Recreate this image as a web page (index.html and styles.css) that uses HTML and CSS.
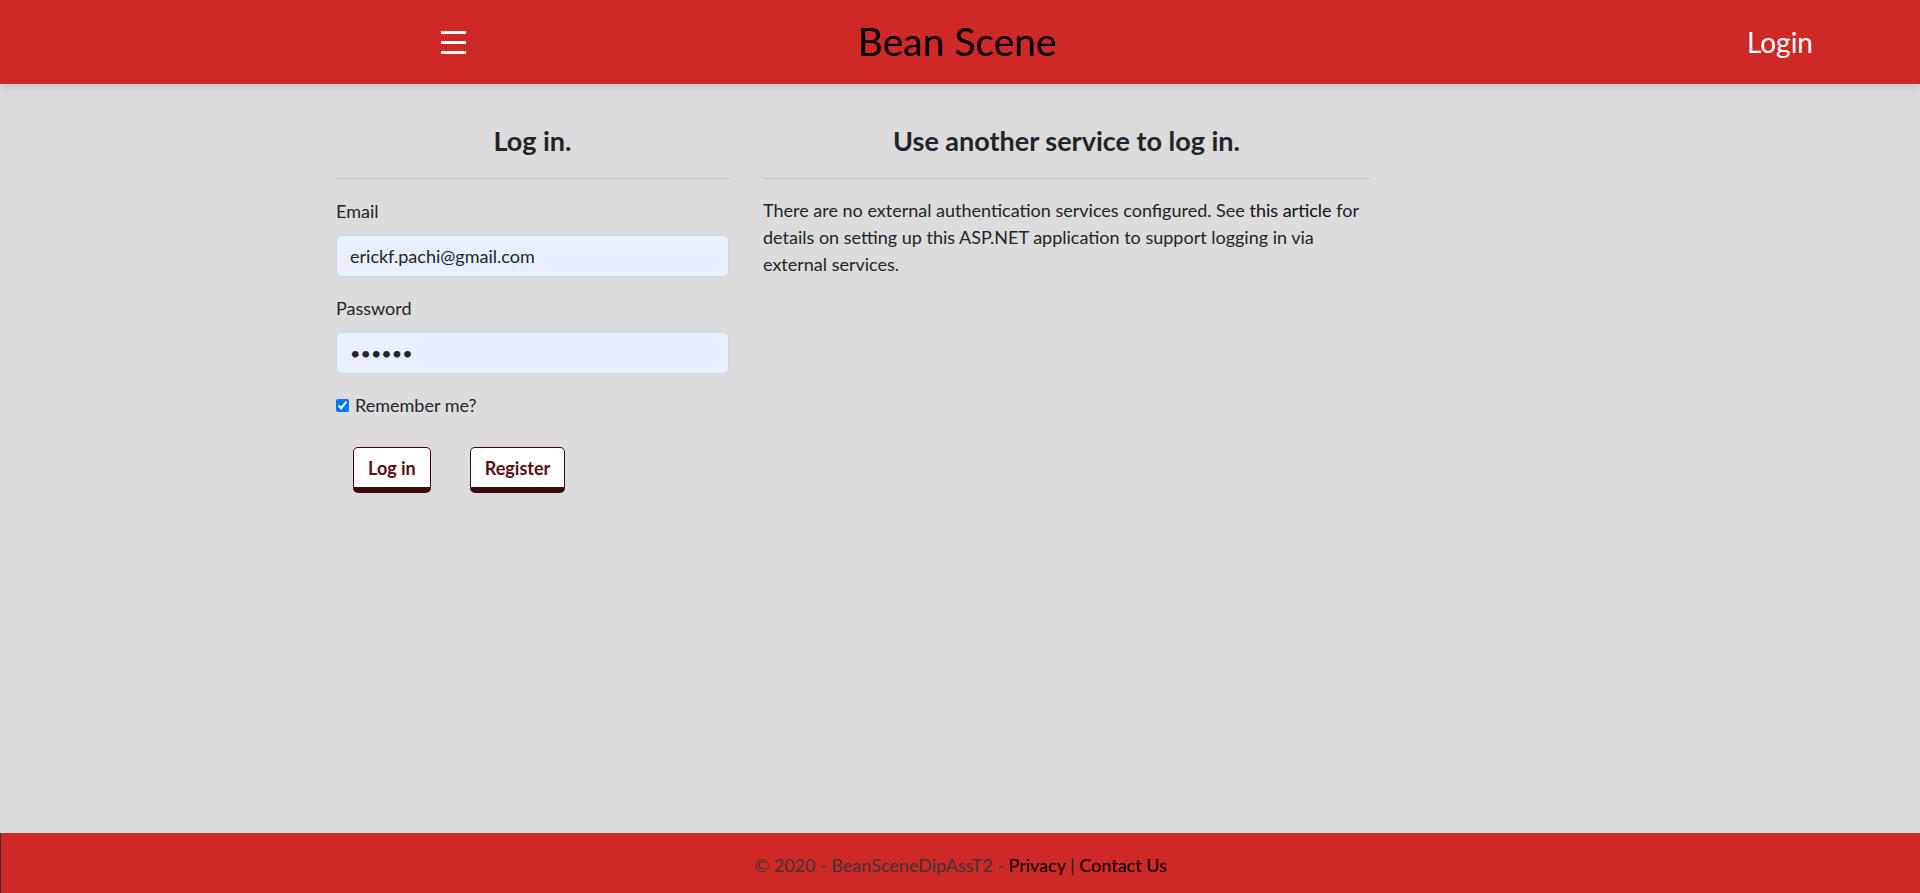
FILE: index.html
```html
<!DOCTYPE html>
<html lang="en">
<head>
<meta charset="utf-8">
<title>Log in - Bean Scene</title>
<link rel="stylesheet" href="styles.css">
</head>
<body>
<div class="page">
  <header class="topbar">
    <div class="nav-left">
      <svg class="burger" width="25" height="23" viewBox="0 0 25 23" aria-hidden="true">
        <rect x="0" y="0" width="25" height="3" fill="#fff"/>
        <rect x="0" y="10" width="25" height="3" fill="#fff"/>
        <rect x="0" y="20" width="25" height="3" fill="#fff"/>
      </svg>
    </div>
    <div class="brand">Bean Scene</div>
    <div class="nav-right"><a class="login-link" href="#">Login</a></div>
  </header>

  <main class="main">
    <div class="row">
      <section class="col col-left">
        <h4 class="col-title">Log in.</h4>
        <hr class="rule">
        <form class="login-form">
          <div class="group">
            <label class="label" for="email">Email</label>
            <input class="field" id="email" type="email" value="erickf.pachi@gmail.com">
          </div>
          <div class="group">
            <label class="label" for="pw">Password</label>
            <input class="field" id="pw" type="password" value="123456">
          </div>
          <div class="group check-row">
            <input class="check" id="remember" type="checkbox" checked>
            <label class="check-label" for="remember">Remember me?</label>
          </div>
          <div class="actions">
            <button class="btn" type="button">Log in</button>
            <button class="btn" type="button">Register</button>
          </div>
        </form>
      </section>
      <section class="col col-right">
        <h4 class="col-title">Use another service to log in.</h4>
        <hr class="rule">
        <p class="info">There are no external authentication services configured. See <a class="article" href="#">this article</a> for details on setting up this ASP.NET application to support logging in via external services.</p>
      </section>
    </div>
  </main>

  <footer class="footer">
    <span class="muted">© 2020 - BeanSceneDipAssT2 - </span><a class="foot-link" href="#">Privacy</a><span class="sep"> | </span><a class="foot-link" href="#">Contact Us</a>
  </footer>
</div>
</body>
</html>
```

FILE: styles.css
```css
* { box-sizing: border-box; }

html, body {
  margin: 0;
  padding: 0;
}

body {
  font-family: Lato, "Liberation Sans", sans-serif;
  font-size: 18px;
  line-height: 1.5;
  color: #212529;
  background: #dcdcdc;
}

.page {
  display: flex;
  flex-direction: column;
  min-height: 100vh;
}

.topbar {
  height: 84px;
  background: #cf2927;
  display: grid;
  grid-template-columns: 1fr auto 1fr;
  align-items: center;
  box-shadow: 0 2px 8px rgba(0, 0, 0, 0.12);
  position: relative;
  z-index: 1;
}

.nav-left {
  padding-left: 441px;
  display: flex;
  align-items: center;
}

.burger { display: block; }

.brand {
  font-size: 39px;
  line-height: 1;
  color: #000;
  padding-bottom: 1px;
  padding-right: 6px;
}

.nav-right {
  display: flex;
  justify-content: flex-end;
  padding-right: 107px;
}

.login-link {
  color: #fff;
  font-size: 28px;
  line-height: 1;
  text-decoration: none;
}

.main {
  flex: 1;
  padding-top: 41px;
}

.row {
  display: flex;
  padding-left: 319px;
}

.col { padding: 0 17px; }
.col-left { width: 427px; }
.col-right { width: 641px; }

.col-title {
  margin: 0;
  font-size: 27px;
  font-weight: 700;
  line-height: 1.2;
  text-align: center;
  color: #212529;
}

.rule {
  margin: 21px 0 0;
  border: 0;
  border-top: 1px solid #c4c4c4;
  height: 0;
}

.login-form { padding-top: 19px; }

.group { margin-bottom: 18px; }

.label {
  display: block;
  margin-bottom: 10px;
}

.field {
  display: block;
  width: 100%;
  height: 42px;
  padding: 6px 13px;
  font-family: inherit;
  font-size: 18px;
  color: #212529;
  background: #e8f0fe;
  border: 1px solid #cfd6de;
  border-radius: 6px;
}

.check-row {
  display: flex;
  align-items: center;
  margin-top: 1px;
}

.check {
  width: 13px;
  height: 13px;
  margin: 0 6px 0 0;
}

.actions {
  display: flex;
  gap: 39px;
  padding-left: 17px;
  padding-top: 10px;
}

.btn {
  font-family: inherit;
  font-size: 18px;
  font-weight: 700;
  line-height: 1.5;
  color: #5a0f0f;
  background: #fff;
  border: 1px solid #3d0a0a;
  border-bottom: 6px solid #3d0a0a;
  border-radius: 5px;
  padding: 6px 14px 5px;
  height: 46px;
}

.info {
  margin: 18px 0 0;
  line-height: 1.5;
}

.article {
  color: #111;
  text-decoration: none;
}

.footer {
  height: 60px;
  background: #cf2927;
  border-left: 1px solid #333;
  text-align: center;
  line-height: 60px;
  font-size: 18px;
  padding-top: 2px;
}

.muted { color: #3e3535; }
.sep { color: #222; }
.foot-link { color: #000; text-decoration: none; }
```
